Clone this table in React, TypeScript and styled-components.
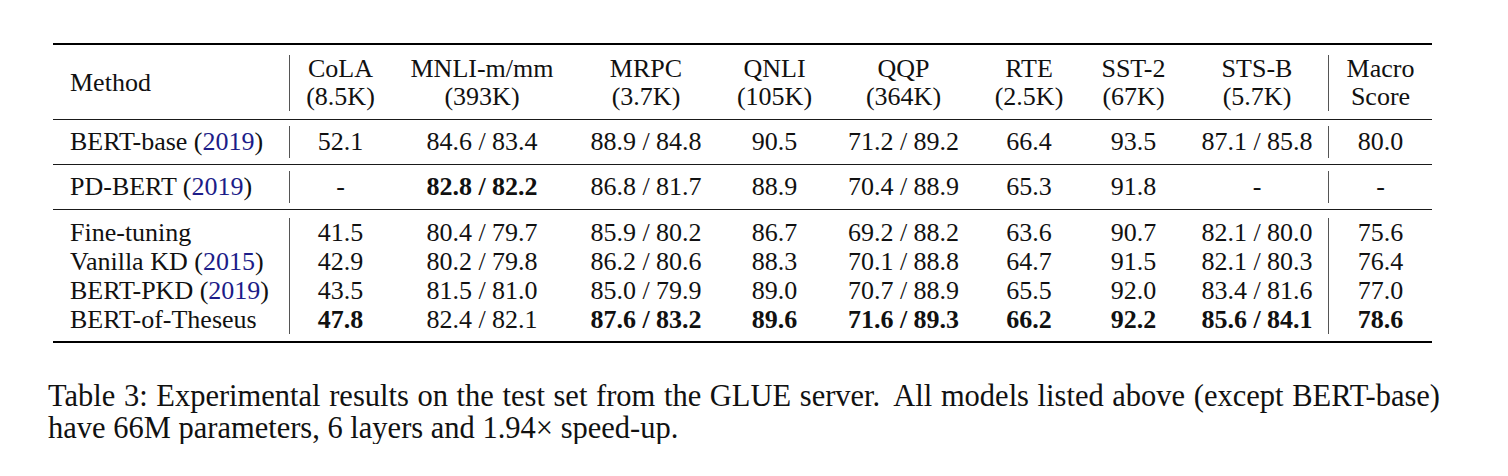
import styled, { createGlobalStyle } from "styled-components";

const GlobalStyle = createGlobalStyle`
  html, body {
    margin: 0;
    padding: 0;
    background: #ffffff;
  }
  body {
    font-family: "Liberation Serif", "Times New Roman", serif;
    color: #111111;
  }
`;

// column widths follow the LaTeX tabular (content + tabcolsep)
const COLUMNS = [236, 102, 182, 146, 111, 147, 104, 105, 142, 104];
// columns that carry a "|" on their left side
const SEPARATED = [1, 9];

type Value = string | { v: string; bold: true };

type Row = {
  name: string;
  year?: string;
  values: Value[];
};

const b = (v: string): Value => ({ v, bold: true });

const HEADERS = [
  ["CoLA", "(8.5K)"],
  ["MNLI-m/mm", "(393K)"],
  ["MRPC", "(3.7K)"],
  ["QNLI", "(105K)"],
  ["QQP", "(364K)"],
  ["RTE", "(2.5K)"],
  ["SST-2", "(67K)"],
  ["STS-B", "(5.7K)"],
  ["Macro", "Score"],
];

const TEACHER: Row[] = [
  {
    name: "BERT-base",
    year: "2019",
    values: ["52.1", "84.6 / 83.4", "88.9 / 84.8", "90.5", "71.2 / 89.2", "66.4", "93.5", "87.1 / 85.8", "80.0"],
  },
];

const PD: Row[] = [
  {
    name: "PD-BERT",
    year: "2019",
    values: ["-", b("82.8 / 82.2"), "86.8 / 81.7", "88.9", "70.4 / 88.9", "65.3", "91.8", "-", "-"],
  },
];

const COMPRESSED: Row[] = [
  {
    name: "Fine-tuning",
    values: ["41.5", "80.4 / 79.7", "85.9 / 80.2", "86.7", "69.2 / 88.2", "63.6", "90.7", "82.1 / 80.0", "75.6"],
  },
  {
    name: "Vanilla KD",
    year: "2015",
    values: ["42.9", "80.2 / 79.8", "86.2 / 80.6", "88.3", "70.1 / 88.8", "64.7", "91.5", "82.1 / 80.3", "76.4"],
  },
  {
    name: "BERT-PKD",
    year: "2019",
    values: ["43.5", "81.5 / 81.0", "85.0 / 79.9", "89.0", "70.7 / 88.9", "65.5", "92.0", "83.4 / 81.6", "77.0"],
  },
  {
    name: "BERT-of-Theseus",
    values: [b("47.8"), "82.4 / 82.1", b("87.6 / 83.2"), b("89.6"), b("71.6 / 89.3"), b("66.2"), b("92.2"), b("85.6 / 84.1"), b("78.6")],
  },
];

const App = () => {
  return (
    <Page>
      <GlobalStyle />
      <Table>
        <Block $top={10} $bottom={8}>
          <Grid>
            <MethodCell $h={56} $center>
              Method
            </MethodCell>
            {HEADERS.map(([top, bottom], i) => (
              <Cell key={top} $h={28} $sep={SEPARATED.includes(i + 1)}>
                {top}
                <br />
                {bottom}
              </Cell>
            ))}
          </Grid>
        </Block>
        <RowBlock rows={TEACHER} top={6} bottom={6} height={32} />
        <RowBlock rows={PD} top={6} bottom={6} height={32} />
        <RowBlock rows={COMPRESSED} top={8} bottom={7} height={29} last />
      </Table>
      <Caption>
        <CaptionLine $justify>
          Table 3: Experimental results on the test set from the GLUE server.&thinsp; All models listed above (except
          BERT-base)
        </CaptionLine>
        <CaptionLine>have 66M parameters, 6 layers and 1.94× speed-up.</CaptionLine>
      </Caption>
    </Page>
  );
};

const RowBlock = ({
  rows,
  top,
  bottom,
  height,
  last,
}: {
  rows: Row[];
  top: number;
  bottom: number;
  height: number;
  last?: boolean;
}) => (
  <Block $top={top} $bottom={bottom} $last={last}>
    <Grid>
      {rows.map((row) => [
        <MethodCell key={row.name} $h={height}>
          {row.name}
          {row.year ? (
            <>
              {" "}(<Cite>{row.year}</Cite>)
            </>
          ) : null}
        </MethodCell>,
        ...row.values.map((value, i) => {
          const bold = typeof value !== "string";
          const text = typeof value === "string" ? value : value.v;
          return (
            <Cell key={row.name + i} $h={height} $bold={bold} $sep={SEPARATED.includes(i + 1)}>
              {text}
            </Cell>
          );
        }),
      ])}
    </Grid>
  </Block>
);

export default App;

const Page = styled.div`
  width: 1392px;
  padding: 43px 0 0 48px;
`;

const Table = styled.div`
  width: ${COLUMNS.reduce((a, c) => a + c, 0)}px;
  margin-left: 5px;
  border-top: 2px solid #000;
  border-bottom: 2px solid #000;
  font-size: 26px;
`;

const Block = styled.div<{ $top: number; $bottom: number; $last?: boolean }>`
  padding: ${(p) => p.$top}px 0 ${(p) => p.$bottom}px;
  border-bottom: ${(p) => (p.$last ? "none" : "1px solid #1a1a1a")};
`;

const Grid = styled.div`
  display: grid;
  grid-template-columns: ${COLUMNS.map((w) => `${w}px`).join(" ")};
`;

const Cell = styled.div<{ $h: number; $sep?: boolean; $bold?: boolean }>`
  text-align: center;
  white-space: nowrap;
  line-height: ${(p) => p.$h}px;
  font-weight: ${(p) => (p.$bold ? 700 : 400)};
  border-left: ${(p) => (p.$sep ? "1px solid #555" : "none")};
`;

const MethodCell = styled.div<{ $h: number; $center?: boolean }>`
  display: flex;
  align-items: center;
  padding-left: 17px;
  white-space: nowrap;
  height: ${(p) => p.$h}px;
  line-height: ${(p) => (p.$center ? "28px" : `${p.$h}px`)};
`;

const Cite = styled.span`
  color: #1c1c88;
`;

const Caption = styled.div`
  margin-top: 37px;
  width: 1392px;
  font-size: 30.5px;
  line-height: 32px;
`;

const CaptionLine = styled.div<{ $justify?: boolean }>`
  white-space: nowrap;
  text-align: ${(p) => (p.$justify ? "justify" : "left")};
  text-align-last: ${(p) => (p.$justify ? "justify" : "auto")};
`;
